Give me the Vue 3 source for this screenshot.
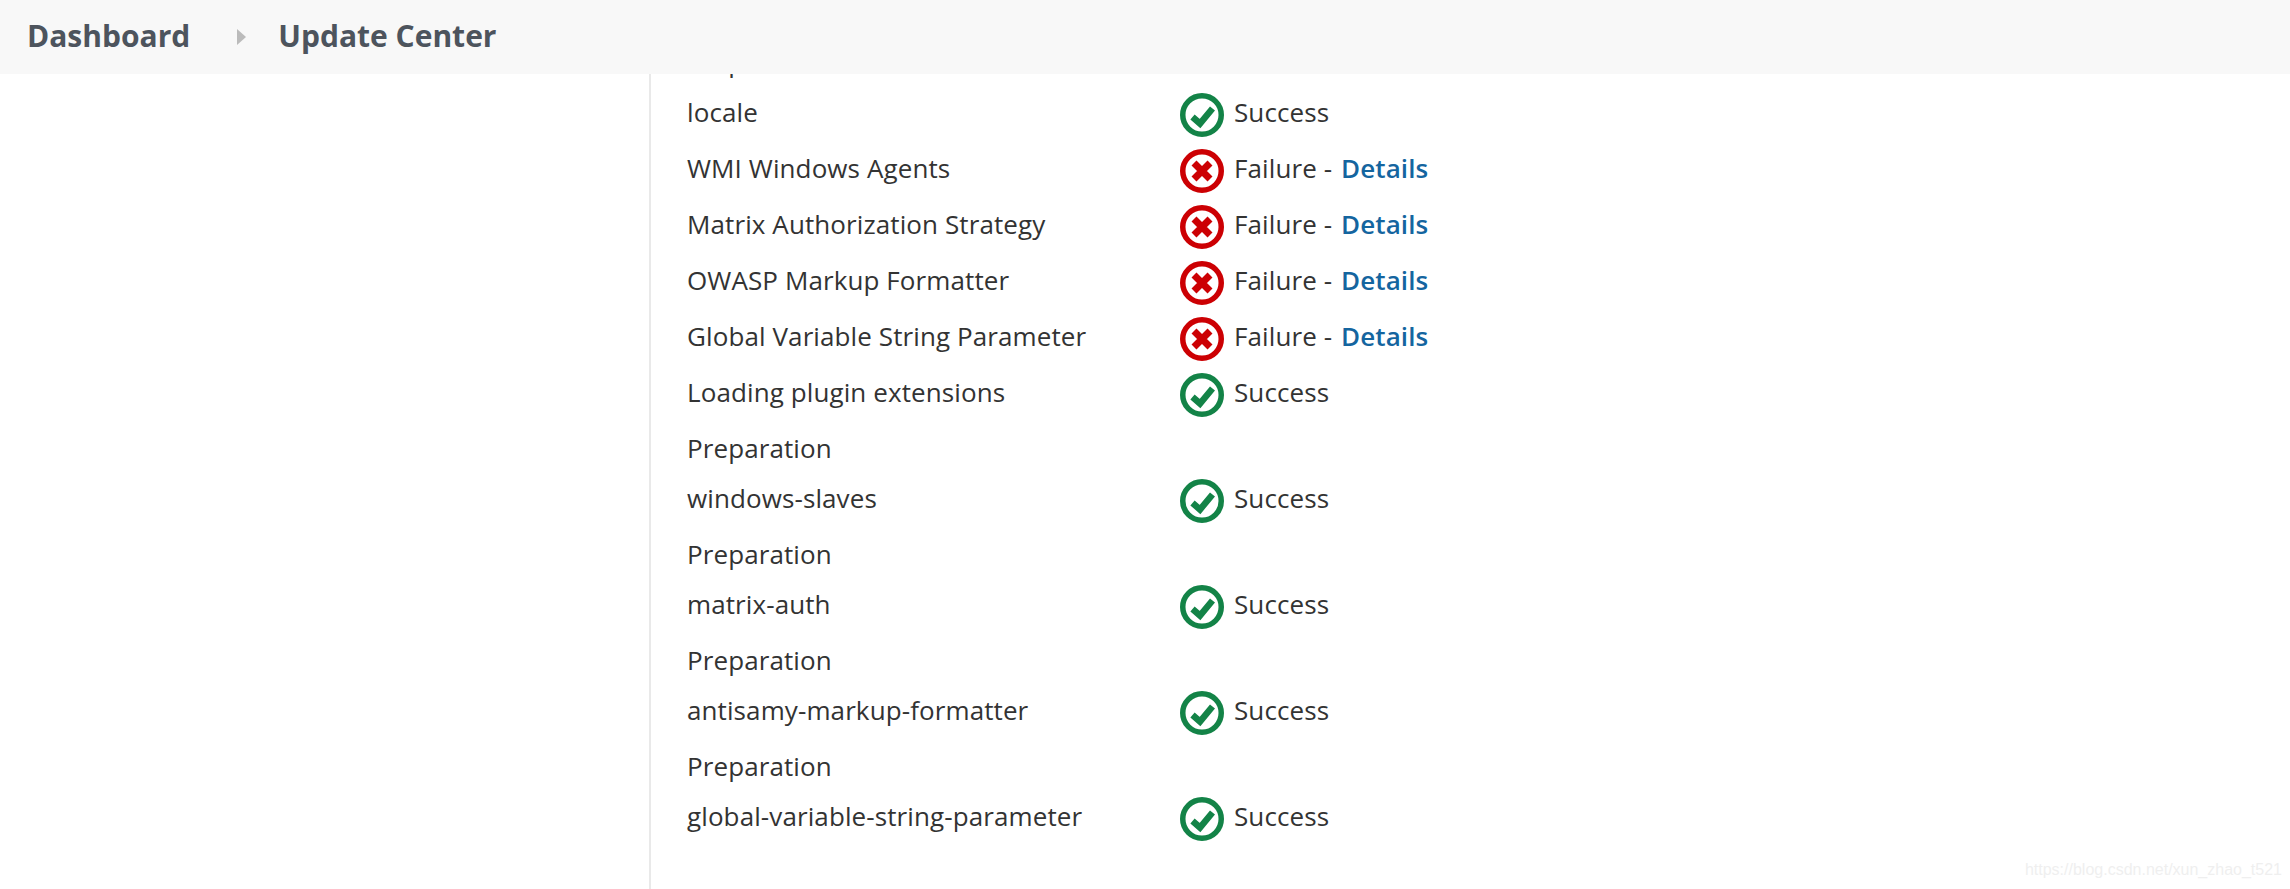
<script setup>
const rows = [
  { name: 'Preparation' },
  { name: 'locale', status: 'ok' },
  { name: 'WMI Windows Agents', status: 'fail' },
  { name: 'Matrix Authorization Strategy', status: 'fail' },
  { name: 'OWASP Markup Formatter', status: 'fail' },
  { name: 'Global Variable String Parameter', status: 'fail' },
  { name: 'Loading plugin extensions', status: 'ok' },
  { name: 'Preparation' },
  { name: 'windows-slaves', status: 'ok' },
  { name: 'Preparation' },
  { name: 'matrix-auth', status: 'ok' },
  { name: 'Preparation' },
  { name: 'antisamy-markup-formatter', status: 'ok' },
  { name: 'Preparation' },
  { name: 'global-variable-string-parameter', status: 'ok' }
]
</script>

<template>
  <div class="page">
    <header class="breadcrumbs">
      <a class="crumb">Dashboard</a>
      <span class="arrow"></span>
      <a class="crumb">Update Center</a>
    </header>

    <div class="layout">
      <aside class="side"></aside>
      <main class="content">
        <div v-for="(row, i) in rows" :key="i" class="row" :class="{ plain: !row.status }">
          <div class="name">{{ row.name }}</div>
          <div v-if="row.status" class="status">
            <svg class="icon" viewBox="0 0 44 44" :class="row.status">
              <circle cx="22" cy="22" r="19.25" fill="none" stroke="currentColor" stroke-width="5.5" />
              <path v-if="row.status === 'ok'" d="M12.500 24l7.500 6.500 12.500-15" fill="none" stroke="currentColor" stroke-width="6.500" />
              <path v-else d="M14 14l16 16M30 14l-16 16" fill="none" stroke="currentColor" stroke-width="7" />
            </svg>
            <span v-if="row.status === 'ok'">Success</span>
            <span v-else>Failure - <a class="details">Details</a></span>
          </div>
        </div>
      </main>
    </div>

    <div class="watermark">https://blog.csdn.net/xun_zhao_t521</div>
  </div>
</template>

<style>
html, body {
  margin: 0;
  overflow: hidden;
}
</style>

<style scoped>
.page {
  position: relative;
  height: 889px;
  overflow: hidden;
  background: #fff;
  font-family: "Open Sans", "Noto Sans", sans-serif;
  color: #333;
}

.breadcrumbs {
  position: absolute;
  top: 0;
  left: 0;
  right: 0;
  height: 74px;
  z-index: 2;
  display: flex;
  align-items: center;
  padding: 0 0 3px 27px;
  box-sizing: border-box;
  background: #f8f8f8;
}
.crumb {
  font-size: 30px;
  font-weight: 700;
  color: #4d545d;
}
.arrow {
  width: 0;
  height: 0;
  margin: 3px 32px 0 47px;
  border-left: 9px solid #bbb;
  border-top: 8px solid transparent;
  border-bottom: 8px solid transparent;
}

.layout {
  display: flex;
  height: 100%;
}
.side {
  width: 649px;
  flex-shrink: 0;
}
.content {
  flex: 1;
  border-left: 2px solid #e9e9e9;
  padding: 37px 0 0 36px;
  font-size: 26px;
  letter-spacing: 0.1px;
  line-height: 34px;
}

.row {
  display: flex;
  height: 56px;
}
.row.plain {
  height: 50px;
}
.name {
  width: 491px;
  padding-top: 8px;
  white-space: nowrap;
}
.status {
  display: flex;
  padding-top: 8px;
}
.icon {
  width: 44px;
  height: 44px;
  margin: -2px 10px 0 2px;
}
.icon.ok {
  color: #138347;
}
.icon.fail {
  color: #cc0003;
}
.details {
  margin-left: 2px;
  font-weight: 600;
  color: #14659f;
}

.watermark {
  position: absolute;
  right: 8px;
  bottom: 10px;
  font-family: "Liberation Sans", sans-serif;
  font-size: 16px;
  color: #efefef;
}
</style>
